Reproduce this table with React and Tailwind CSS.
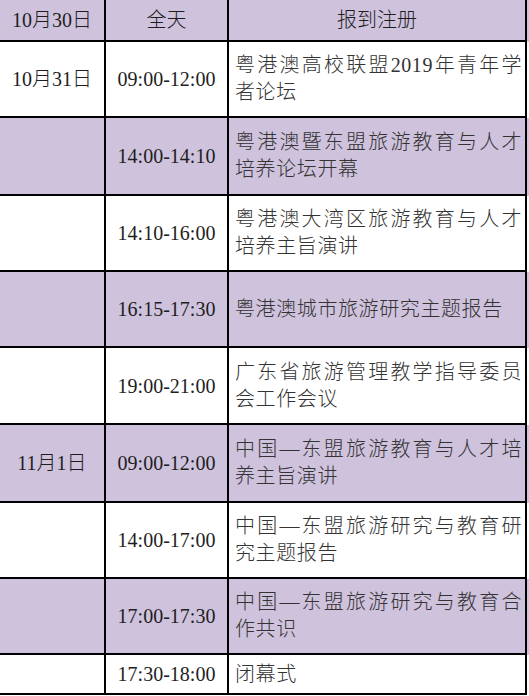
import React from 'react';

const rows = [
  { h: 'h-[76px]', bg: 'bg-white', date: '10月31日', time: '09:00-12:00', lines: ['粤港澳高校联盟2019年青年学', '者论坛'] },
  { h: 'h-[78px]', bg: 'bg-[#cfc2dd]', date: '', time: '14:00-14:10', lines: ['粤港澳暨东盟旅游教育与人才', '培养论坛开幕'] },
  { h: 'h-[76px]', bg: 'bg-white', date: '', time: '14:10-16:00', lines: ['粤港澳大湾区旅游教育与人才', '培养主旨演讲'] },
  { h: 'h-[76px]', bg: 'bg-[#cfc2dd]', date: '', time: '16:15-17:30', lines: ['粤港澳城市旅游研究主题报告'] },
  { h: 'h-[77px]', bg: 'bg-white', date: '', time: '19:00-21:00', lines: ['广东省旅游管理教学指导委员', '会工作会议'] },
  { h: 'h-[78px]', bg: 'bg-[#cfc2dd]', date: '11月1日', time: '09:00-12:00', lines: ['中国—东盟旅游教育与人才培', '养主旨演讲'] },
  { h: 'h-[76px]', bg: 'bg-white', date: '', time: '14:00-17:00', lines: ['中国—东盟旅游研究与教育研', '究主题报告'] },
  { h: 'h-[76px]', bg: 'bg-[#cfc2dd]', date: '', time: '17:00-17:30', lines: ['中国—东盟旅游研究与教育合', '作共识'] },
  { h: 'h-[40px]', bg: 'bg-white', date: '', time: '17:30-18:00', lines: ['闭幕式'] },
];

const cell = 'border-r-2 border-b-2 border-black flex items-center justify-center';

export default function App() {
  return (
    <div className="w-[529px] h-[696px] bg-white text-[20px] font-light text-[#1e1e1e] font-['Liberation_Serif','Noto_Sans_CJK_SC',serif]">
      {/* header */}
      <div className="flex h-[42px] bg-[#cfc2dd]">
        <div className={`w-[106px] ${cell}`}>10月30日</div>
        <div className={`w-[123px] ${cell}`}>全天</div>
        <div className={`w-[298px] ${cell}`}>报到注册</div>
      </div>

      {rows.map((r, i) => (
        <div key={i} className={`flex ${r.h} ${r.bg}`}>
          <div className={`w-[106px] ${cell}`}>{r.date}</div>
          <div className={`w-[123px] ${cell}`}>{r.time}</div>
          <div className="w-[298px] border-r-2 border-b-2 border-black flex flex-col justify-center pl-[6px] pr-[3px] leading-[27px] tracking-[0.6px] text-[#333]">
            {r.lines.map((l, j) => (
              <div
                key={j}
                className={`whitespace-nowrap ${r.lines.length > 1 && j === 0 ? 'text-justify [text-align-last:justify]' : ''}`}
              >
                {l}
              </div>
            ))}
          </div>
        </div>
      ))}
    </div>
  );
}
